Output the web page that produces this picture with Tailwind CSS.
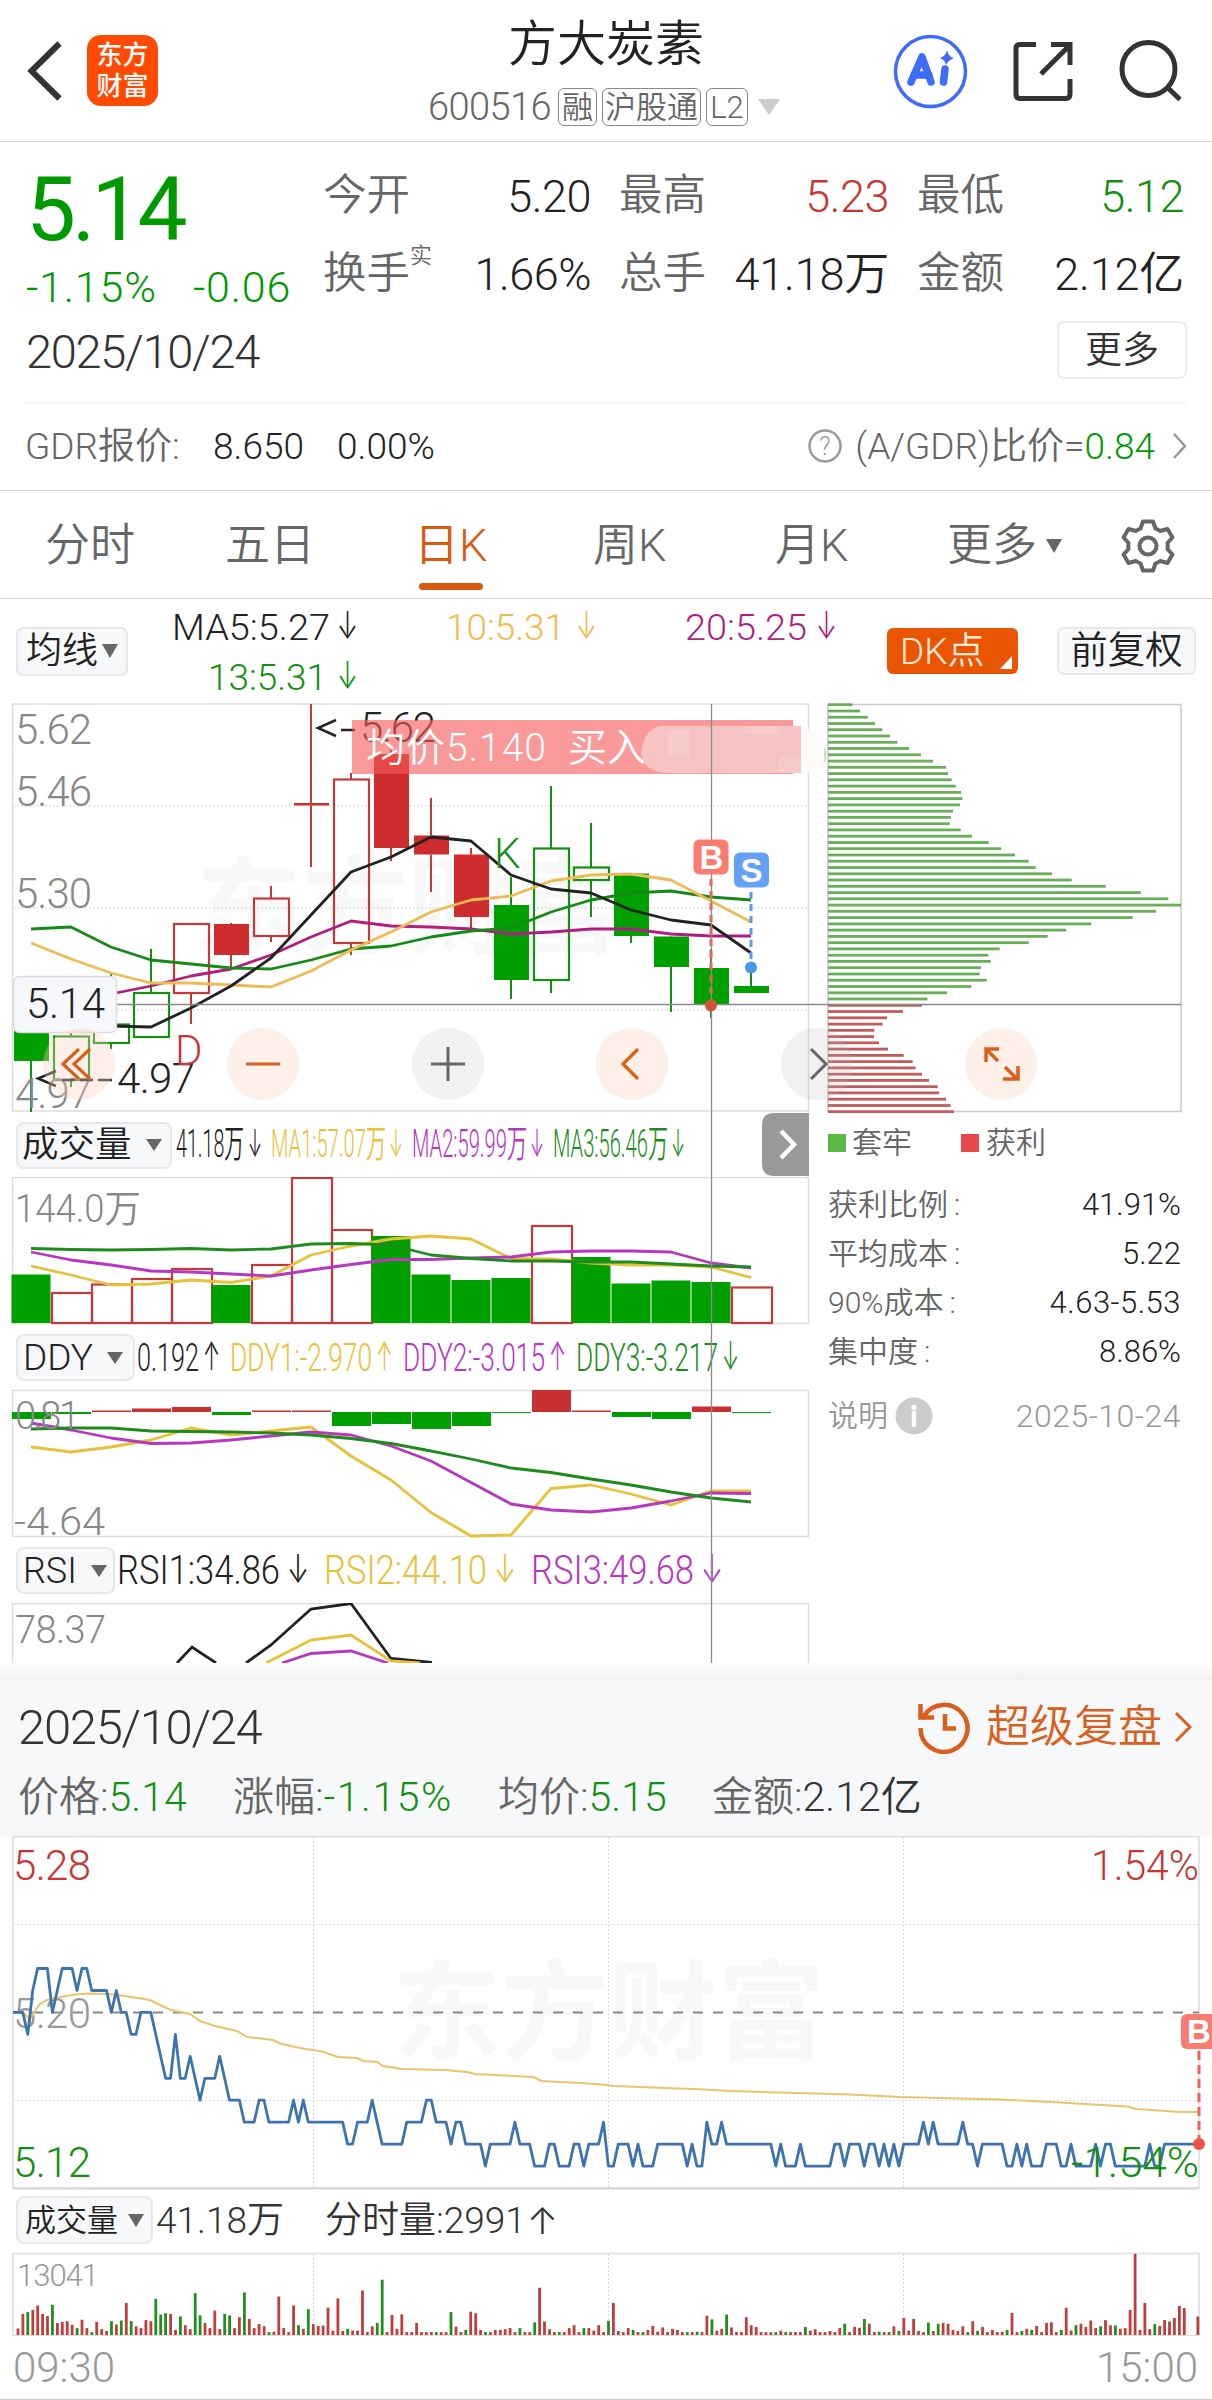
<!DOCTYPE html>
<html lang="zh-CN">
<head>
    <meta charset="UTF-8">
    <meta name="viewport" content="width=device-width, initial-scale=1.0">
    <title>方大炭素 600516</title>
    <script src="https://cdn.jsdelivr.net/npm/@tailwindcss/browser@4"></script>
</head>
<body class="bg-white font-['Roboto','Noto_Sans_CJK_SC',sans-serif] font-[350] text-[#333] leading-none">
<div class="w-[1212px] h-[2400px] overflow-hidden flex flex-col whitespace-nowrap">

    <!-- 顶部导航 -->
    <header class="h-[142px] shrink-0 border-b border-[#d9d9d9] flex items-center relative">
        <svg class="w-[36px] h-[64px] ml-[27px]" viewBox="27 39 36 64" fill="none" stroke="#333" stroke-width="6"><path d="M59.500 43.500L31.500 71L59.500 98.500"/></svg>
        <div class="ml-[24px] w-[71px] h-[71px] rounded-[14px] bg-[#ff4a03] text-white text-[26px] font-medium leading-[31px] pt-[5px] text-center">东方<br>财富</div>
        <div class="absolute left-[428px] top-[18px] flex flex-col">
            <h1 class="text-[49px] leading-[54px] ml-[80px] text-[#222]">方大炭素</h1>
            <div class="flex items-center text-[#666] mt-[16px] h-[38px]">
                <span class="text-[38px] w-[130px] tracking-[-0.6px]">600516</span>
                <span class="border-[1.5px] border-[#888] rounded-[6px] w-[39px] h-[38px] flex items-center justify-center text-[31px]">融</span>
                <span class="border-[1.5px] border-[#888] rounded-[6px] w-[99px] h-[38px] flex items-center justify-center text-[31px] ml-[5px]">沪股通</span>
                <span class="border-[1.5px] border-[#888] rounded-[6px] w-[42px] h-[38px] flex items-center justify-center text-[31px] ml-[5px]">L2</span>
                <svg class="w-[22px] h-[16px] ml-[10px]" viewBox="0 0 22 16"><path d="M0 0H22L11 16Z" fill="#ccc"/></svg>
            </div>
        </div>
        <svg class="w-[320px] h-[80px] ml-auto mr-[12px]" viewBox="880 31 320 80" fill="none">
            <circle cx="930.500" cy="71.500" r="35" stroke="#3d6bfa" stroke-width="3.500"/>
            <g stroke="#3d6bfa" stroke-width="7.500" stroke-linecap="round" stroke-linejoin="round">
                <path d="M911 82L922 57L931 82M914 75H929"/>
                <path d="M945 69L943.500 82"/>
            </g>
            <path d="M947 50Q948.500 57 954 58Q948.500 60 946 65Q945 60 940 58Q946 56 947 50Z" fill="#3d6bfa"/>
            <g stroke="#333" stroke-width="5">
                <path d="M1036 44.500H1020Q1016 44.500 1016 48.500V94Q1016 98.500 1020 98.500H1066Q1070 98.500 1070 94V79"/>
                <path d="M1051 44.500H1070V65M1069 46L1041 74"/>
                <circle cx="1148.500" cy="69" r="26.500"/>
                <path d="M1167 87L1180 99.500"/>
            </g>
        </svg>
    </header>

    <!-- 行情摘要 -->
    <section class="h-[349px] shrink-0 border-b border-[#d9d9d9] px-[25px]">
        <div class="flex h-[172px]">
            <div class="w-[298px] pt-[23px] text-[#009a00]">
                <div class="text-[89px] font-[450] h-[89px] pl-[1px] tracking-[-4px]">5.14</div>
                <div class="flex text-[43px] pt-[12px] tracking-[0.8px]"><span class="w-[168px] pl-[1px]">-1.15%</span><span>-0.06</span></div>
            </div>
            <div class="grid grid-cols-[268px_298px_295px] grid-rows-[78px_78px] pt-[15px] gap-x-0 text-[45px] text-[#222] items-center">
                <div class="flex justify-between items-center"><span class="text-[#666] text-[43.500px]">今开</span><span class="tracking-[-0.5px]">5.20</span></div>
                <div class="flex justify-between items-center pl-[28px]"><span class="text-[#666] text-[43.500px]">最高</span><span class="text-[#c93434] tracking-[-0.5px]">5.23</span></div>
                <div class="flex justify-between items-center pl-[28px]"><span class="text-[#666] text-[43.500px]">最低</span><span class="text-[#129012] tracking-[-0.5px]">5.12</span></div>
                <div class="flex justify-between items-center relative"><span class="text-[#666] text-[43.500px]">换手<sup class="absolute text-[22px] top-[-7px] leading-none">实</sup></span><span class="tracking-[-0.5px]">1.66%</span></div>
                <div class="flex justify-between items-center pl-[28px]"><span class="text-[#666] text-[43.500px]">总手</span><span class="tracking-[-0.2px]">41.18万</span></div>
                <div class="flex justify-between items-center pl-[28px]"><span class="text-[#666] text-[43.500px]">金额</span><span class="tracking-[-0.2px]">2.12亿</span></div>
            </div>
        </div>
        <div class="flex items-center justify-between h-[90px] border-b-2 border-[#f5f5f5] pb-[16px]">
            <span class="text-[47px] tracking-[-1.3px] pl-[1px] pt-[2px]">2025/10/24</span>
            <span class="w-[130px] h-[58px] border-2 border-[#eaeaea] rounded-[7px] flex items-center justify-center text-[37px]">更多</span>
        </div>
        <div class="flex items-center h-[84px] text-[37px]">
            <span class="text-[#666] w-[188px]">GDR报价:</span>
            <span class="w-[124px] text-[#222]">8.650</span>
            <span class="text-[#222]">0.00%</span>
            <svg class="w-[34px] h-[34px] ml-auto" viewBox="0 0 34 34"><circle cx="17" cy="17" r="15.500" fill="none" stroke="#999" stroke-width="2.500"/><text x="17" y="26" text-anchor="middle" font-size="25" fill="#999">?</text></svg>
            <span class="text-[#666] ml-[13px]">(A/GDR)比价=</span><span class="text-[#009a00]">0.84</span>
            <svg class="w-[14px] h-[26px] ml-[18px]" viewBox="0 0 14 26" fill="none" stroke="#999" stroke-width="2.500"><path d="M1 1L12 13L1 25"/></svg>
        </div>
    </section>

    <!-- 周期切换 -->
    <nav class="h-[108px] shrink-0 border-b border-[#d9d9d9] flex items-center text-[45px] text-[#666] relative pt-[2px]">
        <span class="ml-[45px] w-[180px]">分时</span>
        <span class="w-[189px]">五日</span>
        <span class="w-[179px] text-[#d85a10]">日K</span>
        <span class="w-[182px]">周K</span>
        <span class="w-[172px]">月K</span>
        <span>更多</span>
        <svg class="w-[16px] h-[14px] ml-[9px]" viewBox="0 0 16 14"><path d="M0 0H16L8 14Z" fill="#666"/></svg>
        <svg class="w-[54px] h-[54px] ml-[59px]" viewBox="-27 -27 54 54" fill="none" stroke="#666" stroke-width="4" stroke-linejoin="round">
            <path d="M-5 -24.500H5L7.500 -17.500Q10 -16.500 12 -15L19.500 -17L24.500 -8.500L19.500 -3Q20 0 19.500 3L24.500 8.500L19.500 17L12 15Q10 16.500 7.500 17.500L5 24.500H-5L-7.500 17.500Q-10 16.500 -12 15L-19.500 17L-24.500 8.500L-19.500 3Q-20 0 -19.500 -3L-24.500 -8.500L-19.500 -17L-12 -15Q-10 -16.500 -7.500 -17.500Z"/>
            <circle r="8.500"/>
        </svg>
        <i class="absolute left-[419px] top-[92px] w-[64px] h-[7px] rounded-full bg-[#d85a10]"></i>
    </nav>

    <!-- 均线 -->
    <div class="h-[104px] shrink-0 flex items-center">
        <div class="ml-[16px] w-[112px] h-[49px] border-2 border-[#e6e8ec] bg-[#f6f8fa] rounded-[7px] flex items-center pl-[8px] text-[36px] text-[#222]">均线
            <svg class="w-[16px] h-[14px] ml-[4px]" viewBox="0 0 16 14"><path d="M0 0H16L8 14Z" fill="#666"/></svg>
        </div>
        <svg class="w-[740px] h-[104px]" viewBox="128 599 740 104" font-size="37">
            <text x="172" y="640" textLength="158" lengthAdjust="spacingAndGlyphs" fill="#222">MA5:5.27</text>
            <text x="446" y="640" textLength="119" lengthAdjust="spacingAndGlyphs" fill="#eebb4d">10:5.31</text>
            <text x="685" y="640" textLength="122" lengthAdjust="spacingAndGlyphs" fill="#b01e80">20:5.25</text>
            <text x="208" y="690" textLength="119" lengthAdjust="spacingAndGlyphs" fill="#129012">13:5.31</text>
            <g font-family="Inter" font-weight="300" font-size="38">
                <text x="337" y="639" textLength="21" lengthAdjust="spacingAndGlyphs" fill="#222">↓</text>
                <text x="576" y="639" textLength="21" lengthAdjust="spacingAndGlyphs" fill="#eebb4d">↓</text>
                <text x="816" y="639" textLength="21" lengthAdjust="spacingAndGlyphs" fill="#b01e80">↓</text>
                <text x="337" y="689" textLength="21" lengthAdjust="spacingAndGlyphs" fill="#129012">↓</text>
            </g>
        </svg>
        <div class="ml-[19px] w-[131px] h-[46px] bg-[#ea5504] rounded-[6px] text-[#ffeadb] text-[37px] flex items-center pl-[13px] relative">DK点
            <svg class="absolute right-[6px] bottom-[5px] w-[12px] h-[13px]" viewBox="0 0 12 13"><path d="M12 0V13H0Z" fill="#fff"/></svg>
        </div>
        <div class="ml-[39px] w-[139px] h-[48px] border-2 border-[#e6e8ec] bg-[#f6f8fa] rounded-[7px] text-[37.500px] text-[#222] flex items-center justify-center">前复权</div>
    </div>

    <!-- K线与筹码 -->
    <main class="h-[960px] shrink-0 flex relative overflow-hidden">
        <div class="w-[816px] flex flex-col">
            <svg id="kline" class="w-[816px] h-[410px] shrink-0" viewBox="0 703 816 410" fill="none">
                <rect x="12.500" y="704" width="796" height="407" stroke="#ddd" stroke-width="1.500"/>
                <text x="196" y="945" font-size="106" font-weight="700" fill="#f8f8f8">东方财富</text>
                <path d="M13 806H808M13 908H808M13 1010H808" stroke="#d5d5d5" stroke-dasharray="2 2"/>
                <g id="candles"></g>
            </svg>
            <div class="h-[64px] shrink-0 flex items-center relative">
                <div class="ml-[16px] w-[156px] h-[47px] border-2 border-[#e6e8ec] bg-[#f6f8fa] rounded-[8px] flex items-center pl-[4px] text-[36.500px] text-[#222]">成交量
                    <svg class="w-[16px] h-[12px] ml-[14px]" viewBox="0 0 16 12"><path d="M0 0H16L8 12Z" fill="#666"/></svg>
                </div>
                <svg class="w-[580px] h-[64px]" viewBox="172 1113 580 64" font-size="38">
                    <text x="176" y="1157" textLength="68" lengthAdjust="spacingAndGlyphs" fill="#222">41.18万</text>
                    <text x="271" y="1157" textLength="115" lengthAdjust="spacingAndGlyphs" fill="#e6c13a">MA1:57.07万</text>
                    <text x="412" y="1157" textLength="115" lengthAdjust="spacingAndGlyphs" fill="#b737c0">MA2:59.99万</text>
                    <text x="553" y="1157" textLength="115" lengthAdjust="spacingAndGlyphs" fill="#1c8c1c">MA3:56.46万</text>
                    <g font-family="Inter">
                        <text x="248" y="1157" textLength="14" lengthAdjust="spacingAndGlyphs" fill="#222">↓</text>
                        <text x="389" y="1157" textLength="14" lengthAdjust="spacingAndGlyphs" fill="#e6c13a">↓</text>
                        <text x="530" y="1157" textLength="14" lengthAdjust="spacingAndGlyphs" fill="#b737c0">↓</text>
                        <text x="671" y="1157" textLength="14" lengthAdjust="spacingAndGlyphs" fill="#1c8c1c">↓</text>
                    </g>
                </svg>
            </div>
            <svg class="w-[816px] h-[148px] shrink-0" viewBox="0 1177 816 148" fill="none">
                <rect x="12.500" y="1177.500" width="796" height="146" stroke="#ddd" stroke-width="1.500"/>
                <g id="volume"></g>
                <text x="15" y="1222" font-size="38" fill="#888" textLength="126" lengthAdjust="spacingAndGlyphs">144.0万</text>
            </svg>
            <div class="h-[65px] shrink-0 flex items-center">
                <div class="ml-[16px] w-[119px] h-[47px] border-2 border-[#e6e8ec] bg-[#f6f8fa] rounded-[8px] flex items-center pl-[5px] text-[37px] text-[#222]">DDY
                    <svg class="w-[16px] h-[12px] ml-[14px]" viewBox="0 0 16 12"><path d="M0 0H16L8 12Z" fill="#666"/></svg>
                </div>
                <svg class="w-[620px] h-[65px]" viewBox="135 1325 620 65" font-size="39">
                    <text x="137" y="1371" textLength="62" lengthAdjust="spacingAndGlyphs" fill="#222">0.192</text>
                    <text x="230" y="1371" textLength="142" lengthAdjust="spacingAndGlyphs" fill="#e6c13a">DDY1:-2.970</text>
                    <text x="403" y="1371" textLength="142" lengthAdjust="spacingAndGlyphs" fill="#b737c0">DDY2:-3.015</text>
                    <text x="576" y="1371" textLength="142" lengthAdjust="spacingAndGlyphs" fill="#1c8c1c">DDY3:-3.217</text>
                    <g font-family="Inter">
                        <text x="203" y="1370" textLength="17" lengthAdjust="spacingAndGlyphs" fill="#222">↑</text>
                        <text x="376" y="1370" textLength="17" lengthAdjust="spacingAndGlyphs" fill="#e6c13a">↑</text>
                        <text x="549" y="1370" textLength="17" lengthAdjust="spacingAndGlyphs" fill="#b737c0">↑</text>
                        <text x="722" y="1370" textLength="17" lengthAdjust="spacingAndGlyphs" fill="#1c8c1c">↓</text>
                    </g>
                </svg>
            </div>
            <svg class="w-[816px] h-[148px] shrink-0 overflow-visible" viewBox="0 1390 816 148" fill="none">
                <rect x="12.500" y="1390.500" width="796" height="146" stroke="#ddd" stroke-width="1.500"/>
                <g id="ddy"></g>
                <g font-size="38" fill="#888">
                    <text x="15" y="1429" textLength="65">0.81</text>
                    <text x="14" y="1535" textLength="91" lengthAdjust="spacingAndGlyphs">-4.64</text>
                </g>
            </svg>
            <div class="h-[65px] shrink-0 flex items-center">
                <div class="ml-[16px] w-[99px] h-[47px] border-2 border-[#e6e8ec] bg-[#f6f8fa] rounded-[8px] flex items-center pl-[5px] text-[36px] text-[#222]">RSI
                    <svg class="w-[16px] h-[12px] ml-[14px]" viewBox="0 0 16 12"><path d="M0 0H16L8 12Z" fill="#666"/></svg>
                </div>
                <svg class="w-[640px] h-[65px]" viewBox="115 1538 640 65" font-size="40">
                    <text x="117" y="1584" textLength="163" lengthAdjust="spacingAndGlyphs" fill="#222">RSI1:34.86</text>
                    <text x="324" y="1584" textLength="163" lengthAdjust="spacingAndGlyphs" fill="#e6c13a">RSI2:44.10</text>
                    <text x="531" y="1584" textLength="163" lengthAdjust="spacingAndGlyphs" fill="#b737c0">RSI3:49.68</text>
                    <g font-family="Inter" font-weight="300">
                        <text x="287" y="1583" textLength="22" lengthAdjust="spacingAndGlyphs" fill="#222">↓</text>
                        <text x="494" y="1583" textLength="22" lengthAdjust="spacingAndGlyphs" fill="#e6c13a">↓</text>
                        <text x="701" y="1583" textLength="22" lengthAdjust="spacingAndGlyphs" fill="#b737c0">↓</text>
                    </g>
                </svg>
            </div>
            <svg class="w-[816px] h-[60px] shrink-0" viewBox="0 1603 816 60" fill="none">
                <path d="M12.500 1663V1603.500H808.500V1663" stroke="#ddd" stroke-width="1.500"/>
                <g stroke-width="2.800">
                    <path d="M177 1663L192 1647L216 1663M246 1663L271 1645L311 1609L351 1603.500L391 1658.500L432 1662.500" stroke="#222"/>
                    <path d="M266 1663L311 1640L351 1635L391 1661L420 1663" stroke="#e6c13a"/>
                    <path d="M282 1663L311 1653.500L351 1651L388 1663" stroke="#b737c0"/>
                </g>
                <text x="15" y="1643" font-size="38" fill="#888" textLength="91">78.37</text>
            </svg>
        </div>

        <!-- 筹码分布 -->
        <aside class="w-[365px] pl-[11px] flex flex-col text-[30px] text-[#666]">
            <svg class="w-[356px] h-[410px] shrink-0" viewBox="827 703 356 410">
                <rect x="828" y="704.500" width="353" height="407" fill="none" stroke="#c8c8c8" stroke-width="1.500"/>
                <g id="chips"></g>
            </svg>
            <div class="flex items-center h-[60px] pl-[1px] leading-none">
                <i class="w-[18px] h-[18px] bg-[#5cb844] mr-[6px]"></i>套牢
                <i class="w-[18px] h-[18px] bg-[#e84848] mr-[7px] ml-[49px]"></i>获利
            </div>
            <div class="flex flex-col h-[213px] pt-[7px] pl-[1px]">
                <div class="flex justify-between items-center h-[49px]"><span>获利比例<span class="pl-[6px]">:</span></span><span class="text-[#222] text-[31px]">41.91%</span></div>
                <div class="flex justify-between items-center h-[49px]"><span>平均成本<span class="pl-[6px]">:</span></span><span class="text-[#222] text-[31px]">5.22</span></div>
                <div class="flex justify-between items-center h-[49px]"><span>90%成本<span class="pl-[6px]">:</span></span><span class="text-[#222] text-[31px] tracking-[0.5px]">4.63-5.53</span></div>
                <div class="flex justify-between items-center h-[49px]"><span>集中度<span class="pl-[6px]">:</span></span><span class="text-[#222] text-[31px]">8.86%</span></div>
            </div>
            <div class="flex items-center h-[52px] text-[#999] pl-[1px] mt-[4px]">说明
                <svg class="w-[38px] h-[38px] ml-[7px]" viewBox="0 0 38 38"><circle cx="19" cy="19" r="18.500" fill="#ccc"/><path d="M19 16V28" stroke="#fff" stroke-width="4.500" stroke-linecap="round"/><circle cx="19" cy="10.500" r="2.700" fill="#fff"/></svg>
                <span class="ml-auto text-[32px] tracking-[0.5px]">2025-10-24</span>
            </div>
        </aside>

        <!-- 十字线、标注和浮动按钮 -->
        <svg class="absolute left-0 top-0 w-[1212px] h-[960px]" viewBox="0 703 1212 960" fill="none">
            <path d="M762 1164V1125Q762 1113 774 1113H809V1176H774Q762 1176 762 1164Z" fill="#999"/>
            <path d="M781 1131L794 1144.500L781 1158" stroke="#fff" stroke-width="4.500"/>
            <g font-size="42" fill="#888">
                <text x="15" y="744" textLength="77">5.62</text>
                <text x="15" y="806" textLength="77">5.46</text>
                <text x="15" y="908" textLength="77">5.30</text>
                <text x="15" y="1108" textLength="77">4.97</text>
            </g>
            <g font-size="42" fill="#222">
                <text x="360" y="742" textLength="76">5.62</text>
                <text x="117" y="1093" textLength="78">4.97</text>
                <path d="M336 720L318 728L336 736M341 730H355M56 1071L38 1078.500L56 1086M62 1080H75M80 1080H93M98 1080H112" fill="none" stroke="#222" stroke-width="2.500"/>
                <text x="175" y="1065" fill="#c23a3a">D</text>
                <text x="494" y="868" fill="#159015">K</text>
            </g>
            <rect x="352" y="720" width="441" height="54" fill="#f55b5b" fill-opacity=".62"/>
            <g fill="#fff" font-size="39">
                <text x="366" y="761" textLength="180">均价5.140</text>
                <text x="568" y="761" textLength="78">买入</text>
            </g>
            <path d="M800 727Q812 727 824 744V765Q814 774 800 774Z" fill="#fdfafa"/>
            <path d="M824.500 746Q827.500 755 824.500 764Z" fill="#a5d39c"/>
            <path d="M660 726H801V773H664Q642 770 641 752Q644 730 660 726Z" fill="#f7c2c2"/>
            <path d="M668 730H690V757H668ZM745 726H779V734H745ZM779 757H801V773H779Z" fill="#f8cbcb"/>
            <path d="M711.500 704V1663M117 1004.500H1181" stroke="#8a8a8a" stroke-width="1.300"/>
            <rect x="13.500" y="976.500" width="103" height="56" rx="6" fill="#f6f8fb" stroke="#ddd" stroke-width="1.500"/>
            <text x="26" y="1018" font-size="42" fill="#222" textLength="79">5.14</text>
            <path d="M711 879V1000" stroke="#e0695c" stroke-width="3" stroke-dasharray="7 5"/>
            <path d="M751 892V962" stroke="#5b9bea" stroke-width="3" stroke-dasharray="7 5"/>
            <circle cx="711" cy="1005.500" r="6" fill="#d5533d"/>
            <circle cx="751" cy="967.500" r="6" fill="#4a96e8"/>
            <rect x="693.500" y="839.500" width="35" height="35" rx="6" fill="#f87c6f"/>
            <rect x="734" y="852.500" width="35" height="35" rx="6" fill="#64a1f7"/>
            <g fill="#fff" font-family="Liberation Sans" font-size="33" font-weight="700" text-anchor="middle"><text x="711.500" y="869">B</text><text x="751.500" y="882">S</text></g>
            <g fill="#fbd3bd" fill-opacity=".35"><circle cx="79" cy="1064" r="36"/><circle cx="263" cy="1064" r="36"/><circle cx="632" cy="1064" r="36"/><circle cx="1001" cy="1064" r="36"/></g>
            <g fill="#bbb" fill-opacity=".2"><circle cx="448" cy="1064" r="36"/><circle cx="817" cy="1064" r="36"/></g>
            <g stroke="#d8601c" stroke-width="3.200">
                <path d="M79 1049L63 1064L79 1079M90 1049L74 1064L90 1079M246 1064H280M638 1049L623 1064L638 1079"/>
                <path d="M999 1049H986V1062M986 1049L998 1061M1018 1066V1079H1003M1017 1079L1005 1067" stroke-width="3.500"/>
            </g>
            <path d="M431 1064H465M448 1047V1081M811 1049L826 1064L811 1079" stroke="#666" stroke-width="3"/>
        </svg>
    </main>

    <!-- 复盘面板 -->
    <section class="h-[737px] shrink-0 flex flex-col">
        <div class="h-[17px] shrink-0 bg-linear-to-b from-white to-[#f1f1f2]"></div>
        <div class="h-[156px] shrink-0 bg-[#f6f8fa] px-[20px] pt-[19px]">
            <div class="flex items-center h-[56px]">
                <span class="text-[49px] tracking-[-1.300px] -ml-[2px]">2025/10/24</span>
                <svg class="w-[54px] h-[54px] ml-auto" viewBox="917 1699 54 54" fill="none" stroke="#d85f1c" stroke-width="4.500">
                    <path d="M924 1715A23.500 23.500 0 1 1 920.500 1727"/><path d="M920.500 1703V1716.500H934M945 1713V1727.500H956"/>
                </svg>
                <span class="ml-[15px] text-[44px] text-[#d8601c]">超级复盘</span>
                <svg class="w-[18px] h-[32px] ml-[12px]" viewBox="0 0 18 32" fill="none" stroke="#d85f1c" stroke-width="3"><path d="M2 2L16 16L2 30"/></svg>
            </div>
            <div class="flex items-center h-[84px] text-[41px] text-[#666] -ml-[2px]">
                <span class="w-[215px]">价格:<b class="font-[350] text-[#129012]">5.14</b></span>
                <span class="w-[265px]">涨幅:<b class="font-[350] text-[#129012] tracking-[1.5px]">-1.15%</b></span>
                <span class="w-[214px]">均价:<b class="font-[350] text-[#129012]">5.15</b></span>
                <span>金额:<b class="font-[350] text-[#333]">2.12亿</b></span>
            </div>
        </div>
        <svg class="w-[1212px] h-[354px] shrink-0" viewBox="0 1836 1212 354" fill="none">
            <rect x="13" y="1836.500" width="1186" height="351.500" stroke="#ddd" stroke-width="1.500"/>
            <path d="M13 2188.500H1199" stroke="#d5d5d5" stroke-width="2"/>
            <text x="393" y="2051" font-size="108" font-weight="700" fill="#f8f8f8">东方财富</text>
            <path d="M313.500 1837V2188M608.500 1837V2188M903.500 1837V2188M13 1924.500H1199M13 2100.500H1199" stroke="#d8d8d8" stroke-dasharray="2 2"/>
            <path d="M13 2012.500H1199" stroke="#888" stroke-width="1.800" stroke-dasharray="10 10"/>
            <text x="13" y="2028" font-size="42" fill="#999" textLength="78">5.20</text>
            <path d="M18 2012L24 2014L30 2019L35 2011L40 2004L47 2000L60 1997L75 1994.500L90 1993.500L108 1994L125 1996L150 2000L160 2005L171 2010L190 2014L200 2021L215 2026L237 2031L247 2037L273 2040L280 2043.500L300 2048L322 2051.500L338 2057L357 2058L363 2061L377 2062L383 2066L402 2069L445 2070L467 2072L475 2074L533 2077L542 2081L580 2083L608 2085L613 2086L705 2089.500L730 2091L850 2094.500L900 2097L1000 2099.500L1060 2102.500L1128 2106.500L1136 2109L1180 2112L1199 2112" stroke="#e9c46c" stroke-width="2"/>
            <polyline id="price" stroke="#3e74ae" stroke-width="2.800" stroke-linejoin="round"/>
            <g font-size="42">
                <text x="13" y="1880" fill="#c93434" textLength="78">5.28</text>
                <text x="13" y="2177" fill="#129012" textLength="78">5.12</text>
                <text x="1091" y="1880" fill="#c93434" textLength="108" lengthAdjust="spacingAndGlyphs">1.54%</text>
                <text x="1071" y="2177" fill="#129012" textLength="128" lengthAdjust="spacingAndGlyphs">-1.54%</text>
            </g>
            <path d="M1199 2051V2144" stroke="#ee6156" stroke-width="3" stroke-dasharray="9 5"/>
            <circle cx="1199" cy="2144" r="6" fill="#ee5348"/>
            <rect x="1181" y="2014" width="36" height="35" rx="6" fill="#f87c6f"/>
            <text x="1199" y="2043" font-family="Liberation Sans" font-size="33" font-weight="700" text-anchor="middle" fill="#fff">B</text>
        </svg>
        <div class="h-[62px] shrink-0 flex items-center pb-[2px] text-[37px] text-[#333]">
            <div class="ml-[16px] w-[137px] h-[48px] border-2 border-[#e6e8ec] bg-[#f6f8fa] rounded-[8px] flex items-center pl-[7px] text-[31px] text-[#222]">成交量
                <svg class="w-[16px] h-[13px] ml-[10px]" viewBox="0 0 16 13"><path d="M0 0H16L8 13Z" fill="#666"/></svg>
            </div>
            <span class="w-[169px] ml-[3px]">41.18万</span>
            <span>分时量:2991</span><span class="font-['Inter'] font-light pl-[1px]">↑</span>
        </div>
        <svg class="w-[1212px] h-[84px] shrink-0" viewBox="0 2252 1212 84" fill="none">
            <rect x="13" y="2253.500" width="1186" height="82" stroke="#ddd" stroke-width="1.500"/>
            <path d="M313.500 2254V2335M608.500 2254V2335M903.500 2254V2335" stroke="#d8d8d8" stroke-dasharray="2 2"/>
            <g id="ticks"></g>
            <text x="17" y="2286" font-size="31" fill="#999" textLength="82">13041</text>
        </svg>
        <div class="flex justify-between items-center h-[64px] pl-[13px] pr-[14px] pt-[1px] text-[42px] text-[#999] border-b border-[#ccc]"><span>09:30</span><span>15:00</span></div>
    </section>
</div>

<script>
    const RED = '#c23a3a', GREEN = '#159015';
    const SOLID_RED = '#cf2d2d', SOLID_GREEN = '#00a000';
    const get = (id) => document.getElementById(id);
    const col = (i) => 31 + i * 40;
    const rect = (x, y, w, h, attrs) => `<rect x="${x}" y="${y}" width="${w}" height="${h}" ${attrs}/>`;
    const solid = (c) => `fill="${c}"`;
    const hollow = (c) => `stroke="${c}" stroke-width="2.2"`;

    // 从第 start 根开始画均线
    function line(values, color, start = 0) {
        const pts = values.map((y, i) => `${col(i + start)},${y}`).join(' ');
        return `<polyline points="${pts}" stroke="${color}" stroke-width="2.800" stroke-linejoin="round"/>`;
    }

    // [类型, 实体上, 实体下, 影线上, 影线下]  G/R 实心, g/r 空心
    const candles = [
        ['G', 1025, 1061, 1025, 1112], ['g', 1036.5, 1080, 1033, 1087], ['g', 1024.5, 1043, 974, 1049],
        ['g', 993, 1037, 949, 1037], ['r', 924, 993, 924, 1024], ['R', 924, 955, 923, 968],
        ['r', 898.5, 936, 886, 942], ['R', 803, 805.5, 704, 867], ['r', 779.5, 943, 773, 955],
        ['R', 754, 848, 747, 861], ['R', 835.5, 854.5, 798, 892], ['R', 854.5, 917, 848, 929],
        ['G', 905, 980, 877, 999], ['g', 848.5, 980, 786, 993], ['g', 867.5, 880, 823, 917],
        ['G', 873.5, 936, 873, 943], ['G', 936.5, 967, 936, 1012], ['G', 968, 1005, 949, 1018],
        ['G', 986, 993, 962, 993],
    ];
    get('candles').innerHTML = candles.map(([t, top, bot, hi, lo], i) => {
        const x = col(i), c = t.toLowerCase() === 'g' ? GREEN : RED;
        const wick = `<path d="M${x} ${hi}V${top}M${x} ${bot}V${lo}" stroke="${c}" stroke-width="2"/>`;
        return wick + (t === 'G' ? rect(x - 17, top, 35, bot - top, solid(SOLID_GREEN))
            : t === 'R' ? rect(x - 17, top, 35, bot - top, solid(SOLID_RED))
            : rect(x - 17, top, 35, bot - top, hollow(c)));
    }).join('')
        + line([994, 986, 976, 969, 955, 937, 921, 926, 927, 929, 934, 932, 929, 929, 934, 936, 936], '#b01e80', 2)
        + line([929, 927, 947, 960, 964, 968, 969, 960, 949, 946, 937, 931, 928, 912, 900, 893, 891, 897, 900], '#158a15')
        + line([943, 959, 973, 983, 983, 985, 987, 971, 950, 932, 912, 900, 896, 881, 875, 874, 880, 901, 922], '#eebb55')
        + line([1026, 1027, 1008, 986, 958, 915, 872, 857, 837, 841, 875, 889, 893, 910, 920, 925, 953], '#222', 2);

    const volume = ['G1274.5', 'r1293', 'r1284.5', 'r1279', 'r1269', 'G1285', 'r1265', 'r1178', 'r1230', 'G1236',
        'G1274.5', 'G1280', 'G1278', 'r1226', 'G1257', 'G1283.5', 'G1280.5', 'G1282', 'r1287.5'];
    get('volume').innerHTML = volume.map((v, i) => {
        const y = +v.slice(1);
        return v[0] === 'G' ? rect(col(i) - 19.5, y, 39, 1323 - y, solid(SOLID_GREEN))
            : rect(col(i) - 19, y, 40, 1323 - y, hollow(RED));
    }).join('')
        + line([1266, 1275, 1285, 1284, 1280, 1282.5, 1276, 1255, 1246, 1239, 1236, 1239, 1258.5, 1259, 1263, 1265, 1265, 1267, 1277.5], '#e6c13a')
        + line([1252, 1260, 1265, 1271, 1272, 1274, 1276, 1270, 1264.5, 1259.5, 1259.5, 1258, 1257, 1252, 1251, 1251, 1252, 1263, 1268], '#b737c0')
        + line([1248.5, 1249.5, 1250, 1249.5, 1248.5, 1250, 1249, 1244, 1243.5, 1245, 1255, 1258.5, 1261, 1261, 1262, 1262, 1264, 1266, 1267], '#1c8c1c');

    // 柱子高度, 正数红色在零轴上方
    const ddy = [-7, -2, 1.5, 3.5, 5, -3, 1.5, 1.5, -14, -12, -17, -14, -1, 22, 1.5, -5, -7, 5.5, -1];
    get('ddy').innerHTML = ddy.map((v, i) => v > 0
        ? rect(col(i) - 19, 1412 - v, 39, v, solid('#c93030'))
        : rect(col(i) - 19, 1412, 39, -v, solid(SOLID_GREEN))).join('')
        + line([1447, 1452, 1447, 1440, 1428, 1435, 1431, 1427, 1456, 1480, 1512.5, 1536, 1535, 1488.5, 1485, 1494, 1505, 1491, 1491], '#e6c13a')
        + line([1423, 1430, 1438, 1443.5, 1443, 1440, 1436, 1432, 1435, 1446, 1461, 1482.5, 1504, 1510, 1512, 1508, 1501, 1493, 1493.5], '#b737c0')
        + line([1429, 1428, 1428, 1431, 1431.5, 1432, 1433, 1435, 1438.5, 1443.5, 1451, 1459, 1468, 1472.5, 1479, 1485, 1492, 1498, 1502], '#1c8c1c');

    const chips = [73, 96, 119, 141, 163, 186, 208, 243, 279, 315, 354, 360, 371, 383, 399, 403, 396, 375, 369, 365, 398, 432,
        482, 519, 561, 602, 623, 672, 731, 833, 938, 1021, 1059, 984, 914, 790, 715, 659, 602, 515, 481, 488, 459, 455, 476,
        430, 357, 298, 282, 225, 177, 164, 139, 138, 153, 180, 227, 254, 263, 282, 303, 329, 333, 354, 368, 378];
    get('chips').innerHTML = chips.map((w, i) =>
        rect(828, (703.3 + i * 6.262).toFixed(1), w / 3, 2.8, solid(i < 48 ? '#68ae5b' : '#c25b5b'))).join('');

    // 分时: 分钟:价格(分)
    const price = `0:20 2:20 3:19 4:21 5:22 7:22 8:20 10:22 12:22 13:21 14:22 15:22 16:21 19:21 20:20 21:21 22:20 23:20 24:19 25:19
        26:20 28:20 31:17 32:17 33:19 34:17 35:17 36:18 38:16 39:17 41:17 42:18 44:16 46:16 47:15 49:15 50:16 51:16 52:15 56:15
        57:16 58:15 59:16 60:15 67:15 68:14 69:14 70:15 72:15 73:16 75:14 79:14 80:15 83:15 84:16 85:16 86:15 88:15 89:14 90:15
        91:15 92:14 95:14 96:13 97:14 101:14 102:15 103:14 105:14 106:13 108:13 109:14 110:14 111:13 113:13 114:14 115:14 116:13
        117:14 119:14 120:15 121:13 122:13 123:14 125:14 126:13 127:14 128:13 130:13 131:14 136:14 137:13 138:14 139:13 140:13
        141:15 142:14 143:14 144:15 145:14 154:14 155:13 156:14 157:13 159:13 160:14 161:13 166:13 167:14 168:14 169:13 170:14
        172:14 173:13 174:14 175:14 176:13 177:14 178:13 179:14 180:13 181:14 184:14 185:15 186:14 187:15 188:14 192:14 193:15
        194:14 195:14 196:13 197:14 201:14 202:13 203:13 204:14 205:13 206:14 207:13 209:13 210:14 212:14 213:13 214:13 215:14
        216:13 219:13 220:14 221:13 222:14 223:14 224:13 230:13 231:14 232:13 233:13 234:14 241:14`;
    get('price').setAttribute('points', price.trim().split(/\s+/).map((p) => {
        const [m, v] = p.split(':').map(Number);
        return `${(13 + m * 4.921).toFixed(1)},${(2012.4 + (20 - v) * 21.95).toFixed(1)}`;
    }).join(' '));

    // 每分钟成交量, g 为绿柱
    const ticks = `18 58 63g 69 81 58 52 83g 33 36 38 28 19g 42 19 8g 36 16 11 38g 29 40g 88 38g 24 19 41 38 99g 56g 60g 58 14 51g 27 16
        115g 54g 33 19 67 16 58g 54g 19 49 117g 44 19 30 24 8g 9 106 19 8 81 27g 17 71g 30 25 26 75 12 101 11 17g 12 12 122 8 24 33g
        152g 8 55 17 57 8 8 33 8 8 8 8g 8 8 63g 23 8 14g 64 60 14 8g 8 14 14 16 19 8 19g 8 8 35g 130 37 16 8 8g 8 19 27 8 19g 19 12 27 8
        39g 88 11 8 19 14g 8 8g 14 25 9 21 8 17 14 8 8g 8 9g 8 53 43g 12 17 56g 21 8 8 49 27 22 8 8 8 8g 12 8g 8 8 8 22g 12 16 8 8 11 8 19
        31g 8 22 20 44g 31 8 9g 8 8g 24 11g 47 12 44 11 8 34g 11 31g 33 31 14 11 24 8g 38 11g 22 8 14 8 9 14g 61 8 11g 17 14g 25 8 33 35 8
        14g 75 12 27g 31 22 40 19 24g 41 27 26g 17 19 69 223 14 88 16 30g 25 41 37 47 80 74`;
    get('ticks').innerHTML = ticks.trim().split(/\s+/).map((t, i) => {
        const h = parseInt(t) / 2.75;
        return rect((16.6 + i * 4.921).toFixed(1), (2335 - h).toFixed(1), 2.8, h.toFixed(1), solid(t.endsWith('g') ? '#1f8f1f' : '#bf3f3f'));
    }).join('') + rect(1196.500, 2316.500, 2.8, 18.500, solid('#bf3f3f'));
</script>
</body>
</html>
